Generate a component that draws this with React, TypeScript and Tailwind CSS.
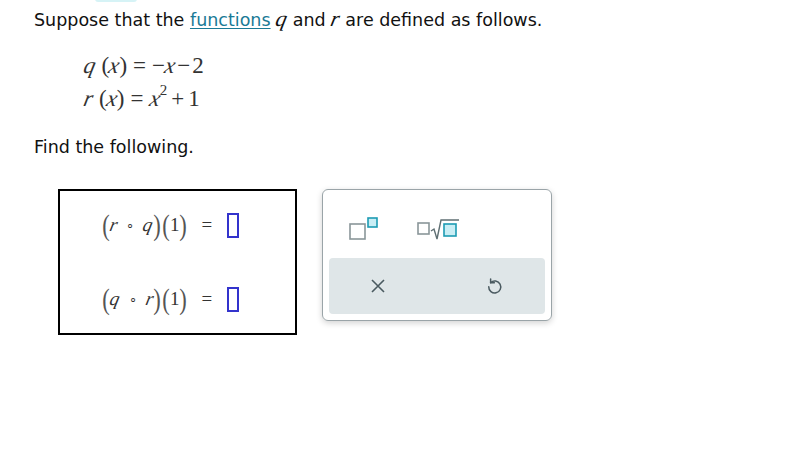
import React from "react";

const sans = { fontFamily: "Verdana, 'DejaVu Sans', sans-serif" };
const serif = { fontFamily: "'Liberation Serif', 'Times New Roman', serif" };

function AnswerBox() {
  return <span className="inline-block w-[12px] h-[25px] border-2 border-[#3333cc] align-middle" />;
}

function V({ c }: { c: string }) {
  return <span className="italic inline-block -skew-x-12">{c}</span>;
}

function Paren({ c }: { c: string }) {
  return <span className="text-[30px] leading-none text-[#555] font-light scale-x-75 inline-block mx-[-3px]">{c}</span>;
}

function Composite({ a, b }: { a: string; b: string }) {
  return (
    <div className="flex items-center text-[19px] text-[#333]" style={serif}>
      <Paren c="(" />
      <span className="mx-[2px]"><V c={a} /></span>
      <span className="mx-[7px] text-[13px]">∘</span>
      <span className="mx-[2px]"><V c={b} /></span>
      <Paren c=")" />
      <span className="w-[5px]" />
      <Paren c="(" />
      <span className="mx-[2px]">1</span>
      <Paren c=")" />
      <span className="ml-[16px] mr-[15px]">=</span>
      <AnswerBox />
    </div>
  );
}

function SuperscriptIcon() {
  return (
    <svg width="32" height="26" viewBox="0 0 32 26">
      <rect x="2" y="8" width="15" height="15" fill="none" stroke="#8a9699" strokeWidth="1.6" />
      <rect x="20" y="2" width="9" height="9" fill="#c9eef5" stroke="#1d9bb3" strokeWidth="1.6" />
    </svg>
  );
}

function RootIcon() {
  return (
    <svg width="46" height="26" viewBox="0 0 46 26">
      <rect x="2" y="7" width="11" height="11" fill="none" stroke="#8a9699" strokeWidth="1.6" />
      <path d="M15 15 L18 13 L21 23 L25 4 L43 4" fill="none" stroke="#5f6f73" strokeWidth="1.4" />
      <rect x="28" y="8" width="12" height="12" fill="#c9eef5" stroke="#1d9bb3" strokeWidth="1.6" />
    </svg>
  );
}

export default function App() {
  return (
    <div className="relative w-[811px] h-[462px] bg-white text-black overflow-hidden">
      <div className="absolute left-[95px] top-[-4px] w-[42px] h-[6px] rounded-full bg-[#d6f3f6]" />

      <div className="pt-[7px] pl-[34px]">
        <p className="text-[17.5px] leading-[24px] text-[#111]" style={sans}>
          Suppose that the{" "}
          <span className="underline text-[#1a7a96] underline-offset-2">functions</span>{" "}
          <span className="text-[22px]" style={serif}><V c="q" /></span> and{" "}
          <span className="text-[22px]" style={serif}><V c="r" /></span> are defined as follows.
        </p>

        <div className="mt-[17px] ml-[50px] text-[23px] text-[#333] leading-[33px]" style={serif}>
          <div className="flex items-baseline">
            <V c="q" />
            <span className="ml-[6px]">(</span>
            <V c="x" />
            <span>)</span>
            <span className="mx-[6px]">=</span>
            <span>−</span>
            <V c="x" />
            <span className="mx-[2px]">−</span>
            <span>2</span>
          </div>
          <div className="flex items-baseline">
            <V c="r" />
            <span className="ml-[6px]">(</span>
            <V c="x" />
            <span>)</span>
            <span className="mx-[6px]">=</span>
            <V c="x" />
            <span className="text-[15px] relative -top-[11px]">2</span>
            <span className="mx-[4px]">+</span>
            <span>1</span>
          </div>
        </div>

        <p className="mt-[17px] text-[17.5px] leading-[24px] text-[#111]" style={sans}>
          Find the following.
        </p>

        <div className="mt-[30px] ml-[24px] flex items-start gap-[25px]">
          <div className="w-[239px] h-[146px] border-2 border-black flex flex-col justify-center gap-[44px] pl-[44px]">
            <Composite a="r" b="q" />
            <Composite a="q" b="r" />
          </div>

          <div className="w-[230px] h-[132px] rounded-[6px] border border-[#9aa4a8] shadow-[0_2px_6px_rgba(0,0,0,0.18)] flex flex-col p-[6px]">
            <div className="flex items-center gap-[36px] h-[62px] pl-[19px] pt-[4px]">
              <SuperscriptIcon />
              <RootIcon />
            </div>
            <div className="flex-1 rounded-[4px] bg-[#dfe6e8] flex items-center justify-between pl-[41px] pr-[42px]">
              <svg width="16" height="16" viewBox="0 0 16 16">
                <path d="M2 2 L14 14 M14 2 L2 14" stroke="#4a5a60" strokeWidth="1.6" fill="none" />
              </svg>
              <svg width="18" height="18" viewBox="0 0 24 24" fill="none" stroke="#4a5a60" strokeWidth="2" strokeLinecap="round" strokeLinejoin="round">
                <path d="M7.5 7.5 A8 8 0 1 1 5 13" />
                <path d="M7.5 2.5 L7.5 7.5 L12.5 7.5" />
              </svg>
            </div>
          </div>
        </div>
      </div>
    </div>
  );
}
